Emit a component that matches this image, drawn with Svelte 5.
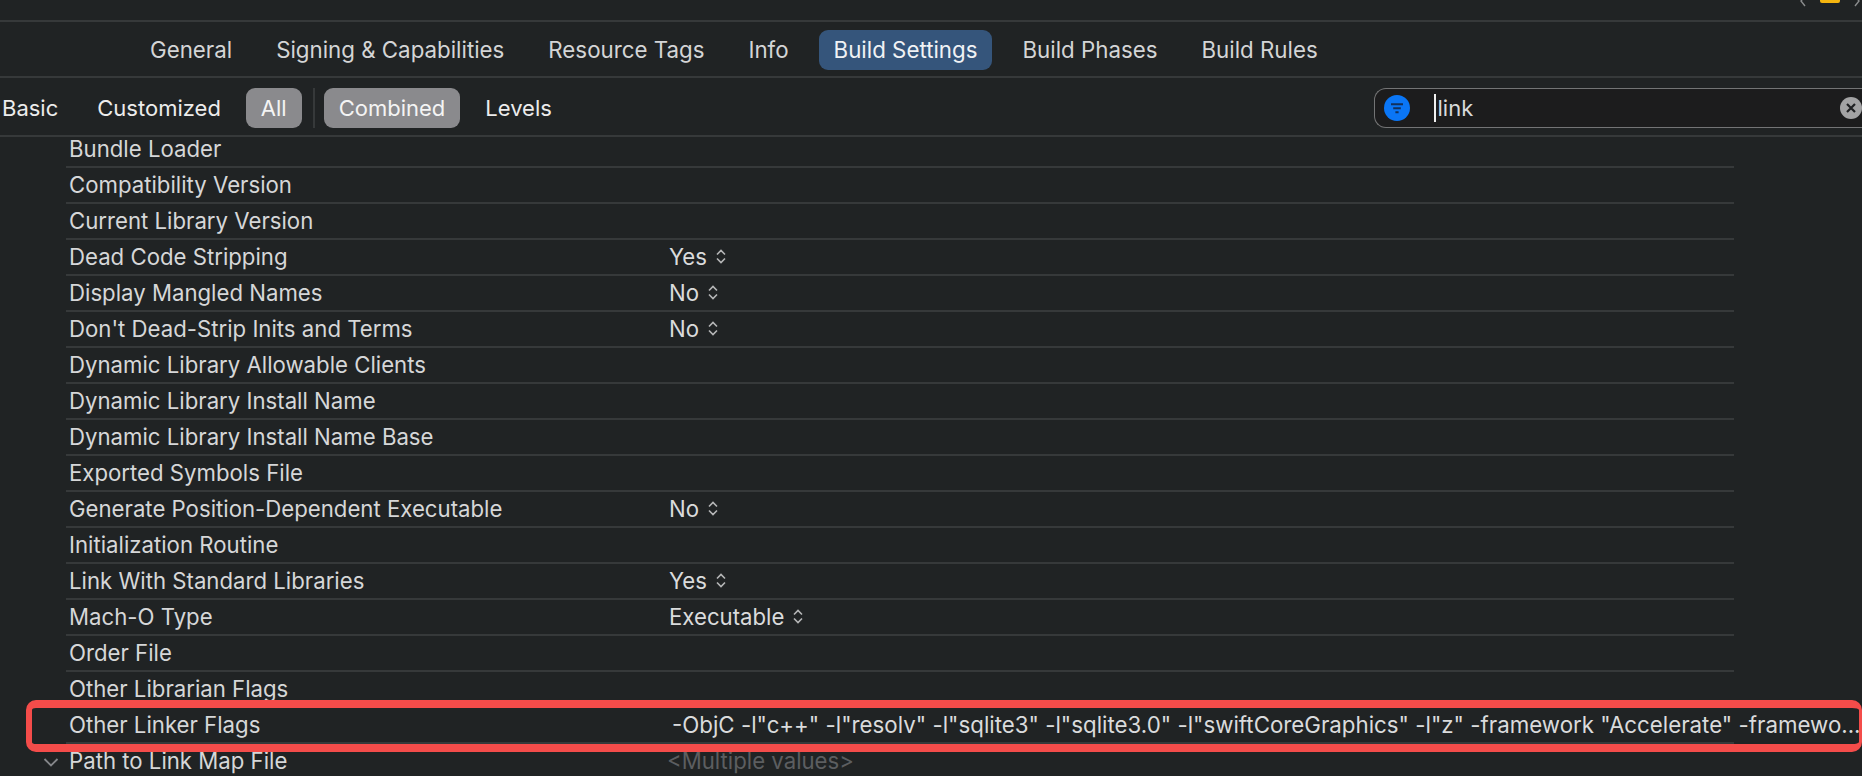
<script>
  const tabs = ['General', 'Signing & Capabilities', 'Resource Tags', 'Info', 'Build Settings', 'Build Phases', 'Build Rules'];

  const rows = [
    { name: 'Bundle Loader' },
    { name: 'Compatibility Version' },
    { name: 'Current Library Version' },
    { name: 'Dead Code Stripping', value: 'Yes', stepper: true },
    { name: 'Display Mangled Names', value: 'No', stepper: true },
    { name: "Don't Dead-Strip Inits and Terms", value: 'No', stepper: true },
    { name: 'Dynamic Library Allowable Clients' },
    { name: 'Dynamic Library Install Name' },
    { name: 'Dynamic Library Install Name Base' },
    { name: 'Exported Symbols File' },
    { name: 'Generate Position-Dependent Executable', value: 'No', stepper: true },
    { name: 'Initialization Routine' },
    { name: 'Link With Standard Libraries', value: 'Yes', stepper: true },
    { name: 'Mach-O Type', value: 'Executable', stepper: true },
    { name: 'Order File' },
    { name: 'Other Librarian Flags' },
    { name: 'Other Linker Flags', value: '-ObjC -l"c++" -l"resolv" -l"sqlite3" -l"sqlite3.0" -l"swiftCoreGraphics" -l"z" -framework "Accelerate" -framewo...', wide: true },
    { name: 'Path to Link Map File', value: '<Multiple values>', muted: true, open: true }
  ];
</script>

<div class="page">
  <div class="window-bar">
    <div class="nav">
      <svg width="8" height="10" viewBox="0 0 8 10"><path d="M6 -4 L2 1 L6 6" fill="none" stroke="#8a8c8d" stroke-width="1.4"/></svg>
      <span class="warn"></span>
      <svg width="8" height="10" viewBox="0 0 8 10"><path d="M2 -4 L6 1 L2 6" fill="none" stroke="#8a8c8d" stroke-width="1.4"/></svg>
    </div>
  </div>

  <div class="tabs">
    {#each tabs as t}
      <span class="tab" class:active={t === 'Build Settings'}>{t}</span>
    {/each}
  </div>

  <div class="filters">
    <div class="filter-left">
      <span class="seg first">Basic</span>
      <span class="seg">Customized</span>
      <span class="seg on">All</span>
      <span class="divider"></span>
      <span class="seg on">Combined</span>
      <span class="seg">Levels</span>
    </div>
    <div class="search">
      <span class="filter-icon">
        <svg width="14" height="11" viewBox="0 0 14 11"><path d="M1 1.2h12M3.2 5.2h7.6M5.4 9.2h3.2" stroke="#12305c" stroke-width="2" fill="none"/></svg>
      </span>
      <span class="caret"></span>
      <span class="query">link</span>
      <span class="clear">
        <svg width="12" height="12" viewBox="0 0 12 12"><path d="M2 2l8 8M10 2l-8 8" stroke="#1f2022" stroke-width="2.2" fill="none"/></svg>
      </span>
    </div>
  </div>

  <div class="list">
    {#each rows as r}
      <div class="row" class:linker={r.wide}>
        <span class="disclosure">
          {#if r.open}
            <svg width="16" height="9" viewBox="0 0 16 9"><path d="M1.5 1 L8 7.5 L14.5 1" fill="none" stroke="#85878a" stroke-width="1.8"/></svg>
          {/if}
        </span>
        <span class="name">{r.name}</span>
        {#if r.value}
          <span class="value" class:muted={r.muted} class:wide={r.wide}>{r.value}</span>
        {/if}
        {#if r.stepper}
          <svg class="stepper" width="10" height="15" viewBox="0 0 10 15"><path d="M1 5.5 L5 1.5 L9 5.5 M1 9.5 L5 13.5 L9 9.5" fill="none" stroke="#b5b6b7" stroke-width="1.6"/></svg>
        {/if}
      </div>
    {/each}
    <div class="highlight"></div>
  </div>
</div>

<style>
  :global(body) {
    margin: 0;
    background: #202324;
    overflow: hidden;
  }

  .page {
    width: 1862px;
    height: 776px;
    overflow: hidden;
    background: #202324;
    font-family: "Inter", "Liberation Sans", sans-serif;
    color: #d9dadb;
  }

  .window-bar {
    height: 20px;
    border-bottom: 2px solid #36393a;
    display: flex;
    justify-content: flex-end;
  }

  .nav {
    display: flex;
    align-items: flex-start;
    gap: 13px;
    padding-right: 1px;
  }

  .warn {
    width: 20px;
    height: 3px;
    background: #f5b50f;
    border-radius: 0 0 2px 2px;
  }

  .tabs {
    height: 52px;
    padding-top: 2px;
    border-bottom: 2px solid #36393a;
    display: flex;
    align-items: center;
    padding-left: 136px;
    gap: 16px;
    font-size: 22.3px;
    color: #d4d5d6;
  }

  .tab {
    padding: 0 14px;
    height: 40px;
    line-height: 40px;
    border-radius: 9px;
  }

  .tab.active {
    padding: 0 15px;
    background: #35557b;
    color: #f0f2f5;
  }

  .filters {
    height: 54px;
    padding-top: 3px;
    border-bottom: 2px solid #36393a;
    display: flex;
    align-items: center;
    justify-content: space-between;
    font-size: 22px;
    color: #ececec;
  }

  .filter-left {
    display: flex;
    align-items: center;
    gap: 11px;
    padding-left: 2px;
  }

  .seg {
    height: 40px;
    line-height: 40px;
    padding: 0 14px;
    border-radius: 9px;
  }

  .seg.first {
    padding-left: 0;
  }

  .seg.on {
    padding: 0 15px;
    background: #8a8a8d;
    color: #f4f4f4;
  }

  .divider {
    width: 2px;
    height: 40px;
    background: #36393a;
    margin-right: -2px;
  }

  .search {
    width: 504px;
    height: 40px;
    margin-right: -16px;
    flex: none;
    box-sizing: border-box;
    border: 1.5px solid #737475;
    border-right: none;
    border-radius: 12px 0 0 12px;
    background: #1c1c1d;
    display: flex;
    align-items: center;
    padding-left: 9px;
    position: relative;
  }

  .filter-icon {
    width: 26px;
    height: 26px;
    border-radius: 50%;
    background: #0a76f6;
    display: flex;
    align-items: center;
    justify-content: center;
  }

  .caret {
    width: 1.5px;
    height: 28px;
    background: #f0f0f0;
    margin-left: 24px;
  }

  .query {
    font-size: 22px;
    line-height: 26px;
    color: #d9dadb;
    margin-left: 2px;
  }

  .clear {
    position: absolute;
    left: 465px;
    top: 8px;
    width: 22px;
    height: 22px;
    border-radius: 50%;
    background: #a3a3a4;
    display: flex;
    align-items: center;
    justify-content: center;
  }

  .list {
    position: relative;
    font-size: 22.2px;
    line-height: 24px;
  }

  .row {
    height: 33px;
    padding-bottom: 1px;
    margin-left: 66px;
    width: 1668px;
    border-bottom: 2px solid #36393a;
    display: flex;
    align-items: center;
    position: relative;
    color: #d6d7d8;
  }

  /* list is scrolled a little, the first row slides under the filter bar */
  .row:first-child {
    margin-top: -5px;
  }

  .disclosure {
    position: absolute;
    left: -23px;
    top: 14px;
  }

  .disclosure svg {
    display: block;
  }

  .name {
    width: 600px;
    padding-left: 3px;
    flex: none;
    white-space: nowrap;
  }

  .value {
    white-space: nowrap;
    color: #dadbdc;
  }

  .value.wide {
    margin-left: 3px;
    font-size: 22.3px;
  }

  .value.muted {
    margin-left: -2px;
    color: #5c5e60;
  }

  .stepper {
    margin-left: 9px;
    flex: none;
  }

  .highlight {
    position: absolute;
    left: 26px;
    top: 568px;
    width: 1836px;
    height: 52px;
    box-sizing: border-box;
    border-style: solid;
    border-color: #f44c4a;
    border-width: 8px 3px 8px 6px;
    border-radius: 10px;
    pointer-events: none;
  }
</style>
